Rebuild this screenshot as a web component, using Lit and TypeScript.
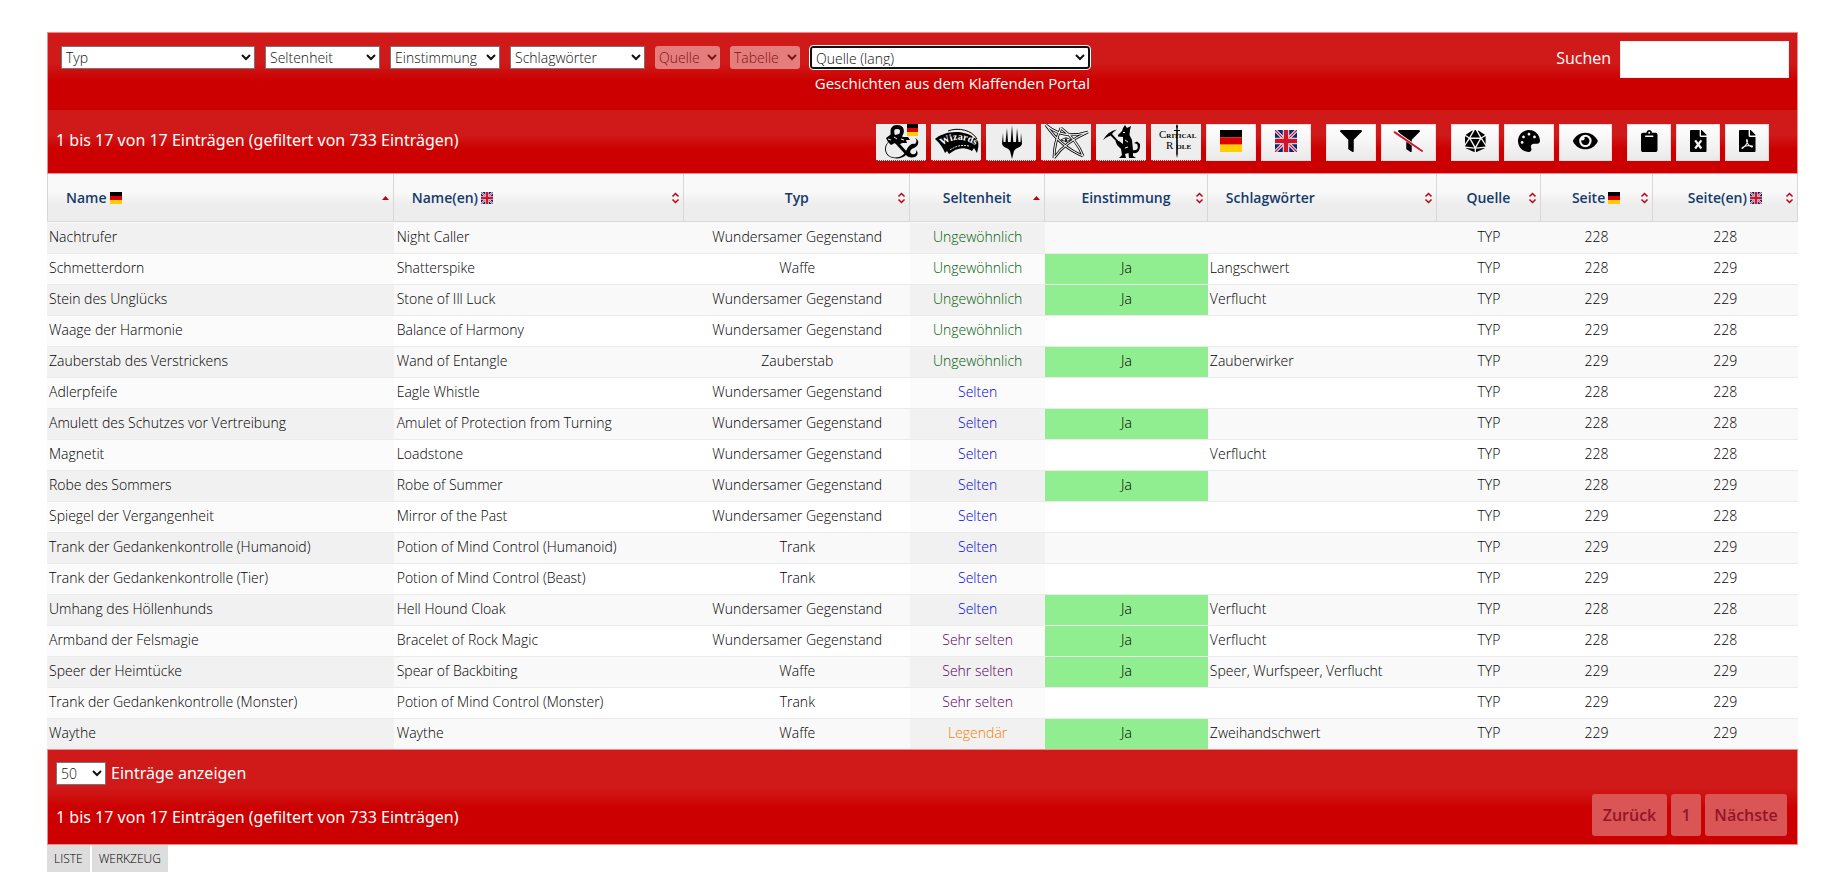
import { LitElement, html, css, svg, nothing } from "lit";
import { customElement, state } from "lit/decorators.js";
import { classMap } from "lit/directives/class-map.js";

type Item = [string, string, string, string, boolean, string, number, number];

const W = "Wundersamer Gegenstand";
const ITEMS: Item[] = [
  ["Nachtrufer", "Night Caller", W, "Ungewöhnlich", false, "", 228, 228],
  ["Schmetterdorn", "Shatterspike", "Waffe", "Ungewöhnlich", true, "Langschwert", 228, 229],
  ["Stein des Unglücks", "Stone of Ill Luck", W, "Ungewöhnlich", true, "Verflucht", 229, 229],
  ["Waage der Harmonie", "Balance of Harmony", W, "Ungewöhnlich", false, "", 229, 228],
  ["Zauberstab des Verstrickens", "Wand of Entangle", "Zauberstab", "Ungewöhnlich", true, "Zauberwirker", 229, 229],
  ["Adlerpfeife", "Eagle Whistle", W, "Selten", false, "", 228, 228],
  ["Amulett des Schutzes vor Vertreibung", "Amulet of Protection from Turning", W, "Selten", true, "", 228, 228],
  ["Magnetit", "Loadstone", W, "Selten", false, "Verflucht", 228, 228],
  ["Robe des Sommers", "Robe of Summer", W, "Selten", true, "", 228, 229],
  ["Spiegel der Vergangenheit", "Mirror of the Past", W, "Selten", false, "", 229, 228],
  ["Trank der Gedankenkontrolle (Humanoid)", "Potion of Mind Control (Humanoid)", "Trank", "Selten", false, "", 229, 229],
  ["Trank der Gedankenkontrolle (Tier)", "Potion of Mind Control (Beast)", "Trank", "Selten", false, "", 229, 229],
  ["Umhang des Höllenhunds", "Hell Hound Cloak", W, "Selten", true, "Verflucht", 228, 228],
  ["Armband der Felsmagie", "Bracelet of Rock Magic", W, "Sehr selten", true, "Verflucht", 228, 228],
  ["Speer der Heimtücke", "Spear of Backbiting", "Waffe", "Sehr selten", true, "Speer, Wurfspeer, Verflucht", 229, 229],
  ["Trank der Gedankenkontrolle (Monster)", "Potion of Mind Control (Monster)", "Trank", "Sehr selten", false, "", 229, 229],
  ["Waythe", "Waythe", "Waffe", "Legendär", true, "Zweihandschwert", 229, 229],
];

const RARITY: Record<string, string> = {
  "Ungewöhnlich": "uncommon",
  "Selten": "rare",
  "Sehr selten": "veryrare",
  "Legendär": "legendary",
};

const deShapes = svg`<rect width="24" height="8" fill="#000"/><rect y="8" width="24" height="8" fill="#d00"/><rect y="16" width="24" height="8" fill="#ffce00"/>`;
const de = html`<svg class="flag" viewBox="0 0 24 24" aria-hidden="true">${deShapes}</svg>`;
const gb = html`<svg class="flag" viewBox="0 0 24 24" aria-hidden="true">
  <rect width="24" height="24" fill="#012a7d"/>
  <path d="M0 0L24 24M24 0L0 24" stroke="#fff" stroke-width="3.4"/>
  <path d="M0 0L24 24M24 0L0 24" stroke="#d0142c" stroke-width="1.4"/>
  <path d="M12 0V24M0 12H24" stroke="#fff" stroke-width="7"/>
  <path d="M12 0V24M0 12H24" stroke="#d0142c" stroke-width="5"/>
</svg>`;

const STAR = "M5 2Q22 17 47 9M47 9Q24 19 13 35M13 35Q13 20 20 5M20 5Q36 17 42 33M42 33Q20 24 5 2";

const art = {
  ampersand: svg`
    <path d="M17 13C15 5 18 4 21 4C27 4 27 9 24 13" fill="none" stroke="#000" stroke-width="3.8"/>
    <path d="M10 15l4-3 2-2 3 2 4-1 4 3 5 0 2 3-4 0 1 3-5 0-3 2-4-2-4 2-3-3z"/>
    <path d="M14 18C8 22 8 34 19 34.500C25 34.500 29 31 31 26C33 22 36 20 39 21C41 19 41 17 39 15C44 17 43 23 38 25C34 26 33 30 36 31C39 32 41 30 40 27C44 31 40 35 35 34.500C32 34 31 33 30 32C27 35 22 36 17 35C7 33 7 21 14 18Z"/>
    <path d="M18 22C15 24 15 30 20 30.500C24 30.500 26 27 26 25L22 27L22 23Z" fill="#eee"/>
    <path d="M20 19L31 31" stroke="#000" stroke-width="3"/>
    <path d="M12 16l3 1M18 14l3 2M25 16l3 1M29 22l3 1" stroke="#eee"/>
    <svg x="31" y="1" width="11" height="12" viewBox="0 0 24 24" preserveAspectRatio="none">${deShapes}</svg>`,
  wizards: svg`
    <path d="M4 16C13 8 35 5 47 18C48 22 47 26 46 30L43 25L41 28C33 23 25 25 18 31L16 28L14 30C12 25 9 20 4 16Z"/>
    <path d="M17 8C27 4 41 7 46 16" fill="none" stroke="#000"/>
    <path id="wiz" d="M11 23Q28 10 47 24" fill="none"/>
    <text class="wiz"><textPath href="#wiz">Wizards</textPath></text>
    <path d="M19 27Q27 21 38 23" fill="none" stroke="#eee" stroke-dasharray="2 1"/>`,
  planeswalker: svg`
    <path d="M26 2L27.300 19H30L31 5L32.500 19L34.500 19L35 10L36 20C36 25 30 24 28 28L26 36L24 28C22 24 16 25 16 20L17 10L17.500 19L19.500 19L21 5L22 19H24.700Z"/>`,
  star: svg`
    <path d=${STAR} fill="none" stroke="#000" stroke-width="2.8"/>
    <path d=${STAR} fill="none" stroke="#eee" stroke-width="1.200"/>
    <path d="M20 17Q25 13 30 17Q25 20 20 17Z" fill="#eee" stroke="#000" stroke-width=".8"/><path d="M25 14L26 17L25 20L24 17Z"/>`,
  kobold: svg`
    <path d="M7 17Q12 8 21 6.500Q17 9 16 11L27 23L26 24L14.500 12.500Q10 14 7 17Z"/>
    <path d="M22 12L26 8L27 5L29 2L31 5L35 3L34 7L33.500 12L36 17L37 27C41 28 43 25 41 21L38 20L41 18.500L44 21C44.500 27 42 31 37 30L37 33L40 35H33L32.500 30L29 31L30 35H23L26 32L25 26L21 22L19.500 18L23 18L27 21L27 14L22 13.500Z"/>
    <path d="M27 9.500l2 0M29 17l3 2M29 25l3-1" stroke="#eee"/>`,
  critical: svg`
    <text class="cr" x="8" y="15">C<tspan class="cr-s">RITICAL</tspan></text>
    <text class="cr" x="15" y="26">R<tspan class="cr-s" dx="3">OLE</tspan></text>
    <path d="M26 1L27 3L26.500 7H29V8H26.800V31L26 35L25.200 31V8H23V7H25.500L25 3Z"/>`,
};

const fa = {
  filter: [512, "M487.976 0H24.028C2.71 0-8.047 25.866 7.058 40.971L192 225.941V432c0 7.831 3.821 15.17 10.237 19.662l80 55.98C298.02 518.69 320 507.493 320 487.98V225.941l184.947-184.97C520.021 25.896 509.338 0 487.976 0z"],
  dice: [480, "M106.75 215.06L1.2 370.95c-3.08 5 .1 11.5 5.93 12.14l208.26 22.07-108.64-190.1zM7.41 315.43L82.7 193.08 6.06 147.1c-2.67-1.6-6.06.32-6.06 3.43v162.81c0 4.03 5.29 5.53 7.41 2.09zM18.25 423.6l194.4 87.66c5.3 2.45 11.35-1.43 11.35-7.26v-65.67l-203.55-22.3c-4.45-.5-6.23 5.59-2.2 7.57zm81.22-257.78L179.4 22.88c4.34-7.06-3.59-15.25-10.78-11.14L17.81 110.35c-2.47 1.62-2.39 5.26.13 6.78l81.53 48.69zM240 176h109.21L253.63 7.62C250.5 2.54 245.25 0 240 0s-10.5 2.54-13.63 7.62L130.79 176H240zm233.94-28.9l-76.64 45.99 75.29 122.35c2.11 3.44 7.41 1.94 7.41-2.1V150.53c0-3.11-3.39-5.03-6.06-3.43zm-93.41 18.72l81.53-48.7c2.53-1.52 2.6-5.16.13-6.78l-150.81-98.6c-7.19-4.11-15.12 4.08-10.78 11.14l79.93 142.94zm79.02 250.21L256 438.32v65.67c0 5.84 6.05 9.71 11.35 7.26l194.4-87.66c4.03-1.97 2.25-8.06-2.2-7.56zm-86.3-200.97l-108.63 190.1 208.26-22.07c5.83-.65 9.01-7.14 5.93-12.14L373.25 215.06zM240 208H139.57L240 383.75 340.43 208H240z"],
  palette: [512, "M204.3 5C104.9 24.4 24.8 104.3 5.2 203.4c-37 187 131.7 326.4 258.8 306.7 41.2-6.4 61.4-54.6 42.5-91.7-23.1-45.4 9.9-98.4 60.9-98.4h79.7c35.8 0 64.8-29.6 64.9-65.3C511.5 97.1 368.1-26.9 204.3 5zM96 320c-17.7 0-32-14.3-32-32s14.3-32 32-32 32 14.3 32 32-14.3 32-32 32zm32-128c-17.7 0-32-14.3-32-32s14.3-32 32-32 32 14.3 32 32-14.3 32-32 32zm128-64c-17.7 0-32-14.3-32-32s14.3-32 32-32 32 14.3 32 32-14.3 32-32 32zm128 64c-17.7 0-32-14.3-32-32s14.3-32 32-32 32 14.3 32 32-14.3 32-32 32z"],
  eye: [576, "M572.52 241.4C518.29 135.59 410.93 64 288 64S57.68 135.64 3.48 241.41a32.35 32.35 0 0 0 0 29.19C57.71 376.41 165.07 448 288 448s230.32-71.64 284.52-177.41a32.35 32.35 0 0 0 0-29.19zM288 400a144 144 0 1 1 144-144 143.93 143.93 0 0 1-144 144zm0-240a95.31 95.31 0 0 0-25.31 3.79 47.85 47.85 0 0 1-66.9 66.9A95.78 95.78 0 1 0 288 160z"],
  clipboard: [384, "M384 112v352c0 26.51-21.49 48-48 48H48c-26.51 0-48-21.49-48-48V112c0-26.51 21.49-48 48-48h80c0-35.29 28.71-64 64-64s64 28.71 64 64h80c26.51 0 48 21.49 48 48zM192 40c-13.255 0-24 10.745-24 24s10.745 24 24 24 24-10.745 24-24-10.745-24-24-24m96 114v-20a6 6 0 0 0-6-6H102a6 6 0 0 0-6 6v20a6 6 0 0 0 6 6h180a6 6 0 0 0 6-6z"],
  file: [384, "M224 136V0H24C10.700 0 0 10.700 0 24v464c0 13.300 10.700 24 24 24h336c13.300 0 24-10.700 24-24V160H248c-13.200 0-24-10.800-24-24zM384 121.900v6.100H256V0h6.100c6.400 0 12.500 2.500 17 7l97.900 98c4.500 4.500 7 10.600 7 16.900z"],
} as const;

const glyph = (name: keyof typeof fa, extra: unknown = nothing) =>
  html`<svg class="glyph" viewBox="0 0 ${fa[name][0]} 512" aria-hidden="true"><path d=${fa[name][1]}/>${extra}</svg>`;

const slash = svg`<path d="M-60 50L560 490" stroke="#fff" stroke-width="70"/><path d="M-80 50L560 490" stroke="#d0142c" stroke-width="44" stroke-linecap="round"/>`;
const sheetMark = svg`<path d="M120 240L264 430M264 240L120 430" stroke="#f4f4f4" stroke-width="52"/>`;
const pdfMark = svg`<path d="M185 225C215 260 190 340 90 420C60 445 60 405 110 390C190 360 260 350 310 375C325 400 270 400 235 360C195 315 165 260 185 225Z" fill="none" stroke="#f4f4f4" stroke-width="28"/>`;

interface Column { cls: string; label: string; flag?: unknown; sorted?: boolean; left?: boolean }
const COLUMNS: Column[] = [
  { cls: "c-name", label: "Name", flag: de, sorted: true, left: true },
  { cls: "c-name-en", label: "Name(en)", flag: gb, left: true },
  { cls: "c-typ", label: "Typ" },
  { cls: "c-rarity", label: "Seltenheit", sorted: true },
  { cls: "c-attune", label: "Einstimmung" },
  { cls: "c-tags", label: "Schlagwörter", left: true },
  { cls: "c-source", label: "Quelle" },
  { cls: "c-page", label: "Seite", flag: de },
  { cls: "c-page-en", label: "Seite(en)", flag: gb },
];

const INFO = "1 bis 17 von 17 Einträgen (gefiltert von 733 Einträgen)";

@customElement("app-root")
export class AppRoot extends LitElement {
  @state() private search = "";

  static styles = css`
    :host { display: block; padding: 32px 46px 16px 47px; background: #fff; color: #000; font: 300 14px/20px "Open Sans", "Noto Sans", sans-serif; }
    * { box-sizing: border-box; }
    button, select, input { font: inherit; margin: 0; }
    .bar { color: #fff; background: linear-gradient(#d01919 0, #d01919 40%, #c00 62%, #c00 100%); border: 1px solid #f58a8a; }
    .filters { display: flex; justify-content: space-between; align-items: flex-start; border-bottom: 0; padding: 8px 8px 0 13px; min-height: 78px; }
    .selects { display: flex; align-items: flex-start; gap: 10px; padding-top: 5px; }
    .pick { height: 23px; padding: 0 0 1px; border: 1px solid #767676; border-radius: 0; background: #fff; color: #111; }
    .pick:disabled { opacity: 1; border: 0; border-radius: 3px; background: #e67d7d; color: #7d1414; }
    .w-typ { width: 194px; }
    .w-rarity { width: 115px; }
    .w-attune { width: 110px; }
    .w-tags { width: 135px; }
    .w-source { width: 65px; }
    .w-table { width: 70px; }
    .w-long { width: 280px; border: 2px solid #101010; border-radius: 3px; outline: 1px solid #fff; }
    .w-count { width: 50px; }
    .active { display: flex; flex-direction: column; align-items: flex-end; gap: 4px; }
    .active-value { font-size: 15px; font-weight: 400; line-height: 20px; }
    .search { display: flex; align-items: center; gap: 9px; font-size: 16px; font-weight: 400; }
    .search-label { padding-bottom: 4px; }
    .search-box { width: 169px; height: 37px; padding: 6px; border: 1px solid #eee; background: #fff; }
    .tools { display: flex; justify-content: space-between; align-items: center; border-top: 0; min-height: 64px; padding: 1px 28px 0 8px; }
    .info { padding-bottom: 4px; font: 400 16px/24px "Noto Sans", "Open Sans", sans-serif; }
    .groups { display: flex; gap: 15px; }
    .group { display: flex; gap: 5px; }
    .tool { display: flex; align-items: center; justify-content: center; width: 50px; height: 37px; padding: 0 0 3px; border: 1px solid #ffd6d6; background: linear-gradient(#fff, #eaeaea); color: #000; }
    .brand { padding: 0; border: 0; border-bottom: 1px dotted #d01919; background: #eee; }
    .small { width: 48px; }
    .mid { width: 55px; }
    .eye { width: 53px; }
    .slim { width: 44px; }
    .art { display: block; width: 50px; height: 37px; }
    .glyph { height: 22px; overflow: visible; }
    .tool .flag { width: 22px; height: 22px; }
    .flag { width: 12px; height: 12px; }
    .wiz { font: 700 10px "Liberation Serif", serif; fill: #fff; }
    .cr { font: 11px "Liberation Serif", serif; }
    .cr-s { font-size: 7px; font-weight: 700; }
    .grid { width: 100%; table-layout: fixed; border-collapse: separate; border-spacing: 0; }
    .c-name { width: 19.8%; }
    .c-name-en { width: 16.6%; }
    .c-typ { width: 12.9%; }
    .c-rarity { width: 7.7%; }
    .c-attune { width: 9.3%; }
    .c-tags { width: 13.1%; }
    .c-source { width: 5.9%; }
    .c-page { width: 6.4%; }
    .c-page-en { width: 8.3%; }
    th { padding: 0; border-right: 1px solid #d8d8d8; border-bottom: 1px solid #d8d8d8; background: linear-gradient(#fafafa 0, #f8f8f8 40%, #ededed 65%, #ededed 100%); }
    th:first-child { border-left: 1px solid #d8d8d8; }
    .sort { display: flex; align-items: center; width: 100%; height: 47px; padding: 0 3px 0 18px; border: 0; background: none; color: #143a6c; font-weight: 600; }
    .sort.centered { padding-left: 12px; }
    .label { flex: 1; display: flex; align-items: center; justify-content: center; gap: 3px; white-space: nowrap; }
    .label.left { justify-content: flex-start; }
    .arrows { width: 9px; height: 12px; flex: none; }
    td { height: 31px; padding: 0 2px 2px; border-top: 1px solid #ebebeb; text-align: center; white-space: nowrap; background: #fff; }
    tbody tr:first-child td { border-top-color: #f9f9f9; }
    td.left { text-align: left; }
    td.name + td.name { padding-left: 3px; }
    tr:nth-child(odd) td { background: #f9f9f9; }
    td.hot { background: #fbfbfb; }
    tr:nth-child(odd) td.hot { background: #f1f1f1; }
    tr td.yes, tr:nth-child(odd) td.yes { background: #90ee90; }
    .uncommon { color: #006008; }
    .rare { color: #0000d8; }
    .veryrare { color: #5a005a; }
    .legendary { color: #f08000; }
    .foot { display: flex; justify-content: space-between; align-items: flex-end; padding: 12px 10px 8px 8px; }
    .foot-left { display: flex; flex-direction: column; gap: 20px; padding-bottom: 3px; }
    .length { display: flex; align-items: center; gap: 5px; height: 23px; font: 400 16px/20px "Noto Sans", "Open Sans", sans-serif; }
    .length-label { padding-bottom: 2px; }
    .length .pick { font: 300 14px/20px "Open Sans", sans-serif; }
    .pages { display: flex; gap: 4px; }
    .page { height: 42px; padding: 0; border: 0; border-radius: 3px; background: #da5555; color: #931528; font-size: 16px; font-weight: 600; }
    .prev { width: 75px; }
    .next { width: 82px; }
    .num { width: 30px; }
    .tabs { display: flex; gap: 2px; }
    .tab { height: 27px; padding: 0 7px; background: #ddd; color: #000; font-size: 12px; line-height: 27px; text-decoration: none; }
  `;

  private pick(cls: string, label: string, disabled = false) {
    return html`<select class="pick ${cls}" aria-label=${label} ?disabled=${disabled}><option>${label}</option></select>`;
  }

  private brand(label: string, shapes: unknown) {
    return html`<button class="tool brand" aria-label=${label}><svg class="art" viewBox="0 0 50 37" aria-hidden="true">${shapes}</svg></button>`;
  }

  private tool(label: string, icon: unknown, size = "") {
    return html`<button class="tool ${size}" aria-label=${label}>${icon}</button>`;
  }

  private head(c: Column) {
    return html`<th scope="col" aria-sort=${c.sorted ? "ascending" : "none"}>
      <button class=${classMap({ sort: true, centered: !c.left })}>
        <span class=${classMap({ label: true, left: !!c.left })}>${c.label}${c.flag ?? nothing}</span>
        <svg class="arrows" viewBox="0 0 9 12" aria-hidden="true">${c.sorted
          ? svg`<path d="M1 8L4.500 4L8 8Z" fill="#c00010"/>`
          : svg`<path d="M1.500 4.500L4.500 1.500L7.500 4.500M1.500 7.500L4.500 10.500L7.500 7.500" fill="none" stroke="#c00010" stroke-width="1.500"/>`}</svg>
      </button>
    </th>`;
  }

  private row(i: Item) {
    return html`<tr>
      <td class="left name hot">${i[0]}</td>
      <td class="left name">${i[1]}</td>
      <td>${i[2]}</td>
      <td class="hot ${RARITY[i[3]]}">${i[3]}</td>
      <td class=${classMap({ yes: i[4] })}>${i[4] ? "Ja" : ""}</td>
      <td class="left">${i[5]}</td>
      <td>TYP</td>
      <td>${i[6]}</td>
      <td>${i[7]}</td>
    </tr>`;
  }

  render() {
    return html`
      <div class="bar filters">
        <div class="selects">
          ${this.pick("w-typ", "Typ")}
          ${this.pick("w-rarity", "Seltenheit")}
          ${this.pick("w-attune", "Einstimmung")}
          ${this.pick("w-tags", "Schlagwörter")}
          ${this.pick("w-source", "Quelle", true)}
          ${this.pick("w-table", "Tabelle", true)}
          <div class="active">
            ${this.pick("w-long", "Quelle (lang)")}
            <span class="active-value">Geschichten aus dem Klaffenden Portal</span>
          </div>
        </div>
        <label class="search"><span class="search-label">Suchen</span>
          <input class="search-box" type="search" .value=${this.search}
            @input=${(e: Event) => { this.search = (e.target as HTMLInputElement).value; }}>
        </label>
      </div>
      <div class="bar tools">
        <div class="info">${INFO}</div>
        <div class="groups">
          <div class="group">
            ${this.brand("D&D Deutsch", art.ampersand)}
            ${this.brand("Wizards", art.wizards)}
            ${this.brand("Magic", art.planeswalker)}
            ${this.brand("Cthulhu", art.star)}
            ${this.brand("Kobold", art.kobold)}
            ${this.brand("Critical Role", art.critical)}
            ${this.tool("Deutsch", de)}
            ${this.tool("Englisch", gb)}
          </div>
          <div class="group">
            ${this.tool("Filter", glyph("filter"))}
            ${this.tool("Filter löschen", glyph("filter", slash), "mid")}
          </div>
          <div class="group">
            ${this.tool("Würfeln", glyph("dice"), "small")}
            ${this.tool("Farben", glyph("palette"))}
            ${this.tool("Spalten", glyph("eye"), "eye")}
          </div>
          <div class="group">
            ${this.tool("Kopieren", glyph("clipboard"), "slim")}
            ${this.tool("Excel", glyph("file", sheetMark), "slim")}
            ${this.tool("PDF", glyph("file", pdfMark), "slim")}
          </div>
        </div>
      </div>
      <table class="grid">
        <colgroup>${COLUMNS.map((c) => html`<col class=${c.cls}>`)}</colgroup>
        <thead><tr>${COLUMNS.map((c) => this.head(c))}</tr></thead>
        <tbody>${ITEMS.map((i) => this.row(i))}</tbody>
      </table>
      <div class="bar foot">
        <div class="foot-left">
          <label class="length">
            <select class="pick w-count"><option>50</option></select>
            <span class="length-label">Einträge anzeigen</span>
          </label>
          <div class="info">${INFO}</div>
        </div>
        <div class="pages">
          <button class="page prev">Zurück</button>
          <button class="page num">1</button>
          <button class="page next">Nächste</button>
        </div>
      </div>
      <nav class="tabs">
        <a class="tab" href="#liste">LISTE</a>
        <a class="tab" href="#werkzeug">WERKZEUG</a>
      </nav>
    `;
  }
}
